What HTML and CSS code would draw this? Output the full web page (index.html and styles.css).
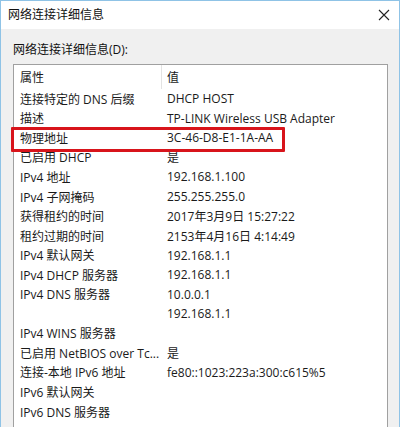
FILE: index.html
```html
<!DOCTYPE html>
<html lang="zh-CN">
<head>
<meta charset="utf-8">
<title>网络连接详细信息</title>
<link rel="stylesheet" href="styles.css">
</head>
<body>
<div class="window">
  <div class="titlebar">
    <span class="title">网络连接详细信息</span>
    <svg class="close" width="12" height="12" viewBox="0 0 12 12"><path d="M1 1 L11 11 M11 1 L1 11" stroke="#222" stroke-width="1.1" fill="none"/></svg>
  </div>
  <div class="content">
    <div class="label">网络连接详细信息(D):</div>
    <div class="list">
      <div class="head">
        <div class="hname">属性</div>
        <div class="hval">值</div>
      </div>
      <div class="rows">
        <div class="row"><span class="name">连接特定的 DNS 后缀</span><span class="val">DHCP HOST</span></div>
        <div class="row"><span class="name">描述</span><span class="val">TP-LINK Wireless USB Adapter</span></div>
        <div class="row"><span class="name">物理地址</span><span class="val">3C-46-D8-E1-1A-AA</span></div>
        <div class="row"><span class="name">已启用 DHCP</span><span class="val">是</span></div>
        <div class="row"><span class="name">IPv4 地址</span><span class="val">192.168.1.100</span></div>
        <div class="row"><span class="name">IPv4 子网掩码</span><span class="val">255.255.255.0</span></div>
        <div class="row"><span class="name">获得租约的时间</span><span class="val">2017年3月9日 15:27:22</span></div>
        <div class="row"><span class="name">租约过期的时间</span><span class="val">2153年4月16日 4:14:49</span></div>
        <div class="row"><span class="name">IPv4 默认网关</span><span class="val">192.168.1.1</span></div>
        <div class="row"><span class="name">IPv4 DHCP 服务器</span><span class="val">192.168.1.1</span></div>
        <div class="row"><span class="name">IPv4 DNS 服务器</span><span class="val">10.0.0.1</span></div>
        <div class="row"><span class="name"></span><span class="val">192.168.1.1</span></div>
        <div class="row"><span class="name">IPv4 WINS 服务器</span><span class="val"></span></div>
        <div class="row"><span class="name">已启用 NetBIOS over Tc...</span><span class="val">是</span></div>
        <div class="row"><span class="name">连接-本地 IPv6 地址</span><span class="val">fe80::1023:223a:300:c615%5</span></div>
        <div class="row"><span class="name">IPv6 默认网关</span><span class="val"></span></div>
        <div class="row"><span class="name">IPv6 DNS 服务器</span><span class="val"></span></div>
      </div>
      <div class="highlight"></div>
    </div>
  </div>
</div>
</body>
</html>
```
FILE: styles.css
```css
* { box-sizing: border-box; }
html, body { margin: 0; padding: 0; }
body {
  width: 400px;
  height: 427px;
  overflow: hidden;
  font-family: "Open Sans", "Noto Sans CJK SC", sans-serif;
  font-size: 12px;
  color: #1a1a1a;
}
.window {
  width: 400px;
  height: 427px;
  border: 1px solid #8fc3e6;
  border-bottom: none;
  background: #f0f0f0;
  display: flex;
  flex-direction: column;
  overflow: hidden;
}
.titlebar {
  height: 28px;
  flex: none;
  background: #fff;
  display: flex;
  align-items: center;
  justify-content: space-between;
  padding: 0 9px 0 7px;
}
.title {
  font-size: 12px;
  line-height: 16px;
  color: #111;
}
.close { display: block; }
.content {
  flex: 1;
  padding: 13px 11px 0 12px;
  display: flex;
  flex-direction: column;
}
.label {
  line-height: 16px;
  height: 22px;
  color: #111;
}
.list {
  position: relative;
  flex: 1;
  background: #fff;
  border: 1px solid #a0a0a0;
  border-bottom: none;
}
.head {
  display: flex;
  height: 24px;
  align-items: center;
}
.hname {
  width: 148px;
  height: 100%;
  padding-left: 6px;
  display: flex;
  align-items: center;
  border-right: 1px solid #e3e3e3;
}
.hval {
  padding-left: 5px;
}
.row {
  display: flex;
  height: 19.55px;
  align-items: center;
  white-space: nowrap;
}
.name {
  width: 153px;
  padding-left: 6px;
  overflow: hidden;
}
.val {
  padding-left: 0;
}
.highlight {
  position: absolute;
  left: -3px;
  top: 62px;
  width: 274px;
  height: 25px;
  border: 3px solid #d8141b;
  border-radius: 1px;
}
```
